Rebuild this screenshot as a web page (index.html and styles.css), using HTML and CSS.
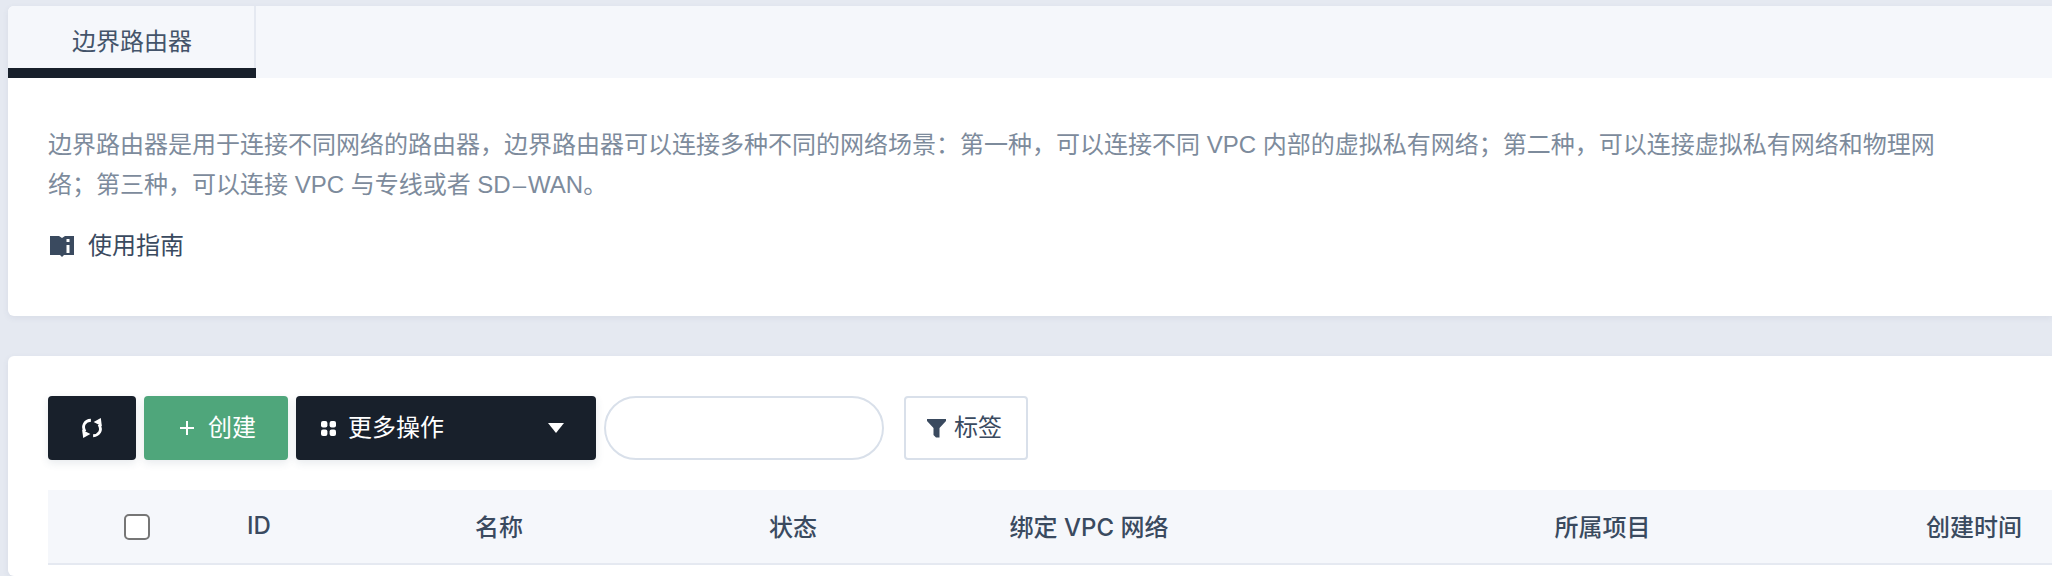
FILE: index.html
```html
<!DOCTYPE html>
<html lang="zh-CN">
<head>
  <meta charset="UTF-8">
  <title>边界路由器</title>
  <link rel="stylesheet" href="styles.css">
</head>
<body>

  <!-- 说明卡片 -->
  <section class="card intro-card">
    <div class="tab-bar">
      <div class="tab tab-active"><span class="tab-label">边界路由器</span></div>
    </div>
    <div class="intro-body">
      <p class="intro-text">边界路由器是用于连接不同网络的路由器，边界路由器可以连接多种不同的网络场景：第一种，可以连接不同 VPC 内部的虚拟私有网络；第二种，可以连接虚拟私有网络和物理网络；第三种，可以连接 VPC 与专线或者 SD&#8202;–&#8202;WAN。</p>
      <a class="guide-link" href="#">
        <svg class="icon-book" viewBox="0 0 24 22" width="24" height="22">
          <path fill="#3a4a5f" fill-rule="evenodd" d="M0 1 H9 L12 3 L15 1 H24 V20 H14 L12 22 L10 20 H0 Z M16.5 4 h3 v3 h-3 Z M16.5 10 h3 v8 h-3 Z"/>
        </svg>
        <span>使用指南</span>
      </a>
    </div>
  </section>

  <!-- 列表卡片 -->
  <section class="card list-card">
    <div class="toolbar">
      <button class="btn btn-dark btn-refresh" type="button">
        <svg viewBox="0 0 20 18" width="22" height="20" fill="none">
          <path stroke="#fff" stroke-width="2.6" d="M9 2 C3.5 2.2 .5 7 3.6 12.2"/>
          <path fill="#fff" d="M1 10.5 L8.5 14.5 L2 18 Z"/>
          <path stroke="#fff" stroke-width="2.6" d="M11 16 C16.5 15.8 19.5 11 16.4 5.8"/>
          <path fill="#fff" d="M19 7.5 L11.5 3.5 L18 0 Z"/>
        </svg>
      </button>
      <button class="btn btn-green btn-create" type="button">
        <svg viewBox="0 0 14 14" width="14" height="14">
          <path fill="#fff" d="M6 0 h2 v6 h6 v2 h-6 v6 h-2 v-6 h-6 v-2 h6 Z"/>
        </svg>
        <span class="btn-text">创建</span>
      </button>
      <button class="btn btn-dark btn-more" type="button">
        <span class="more-label">
          <svg viewBox="0 0 15 15" width="15" height="15" fill="#fff">
            <rect x="0" y="0" width="6.4" height="6.4" rx="2"/>
            <rect x="8.6" y="0" width="6.4" height="6.4" rx="2"/>
            <rect x="0" y="8.6" width="6.4" height="6.4" rx="2"/>
            <rect x="8.6" y="8.6" width="6.4" height="6.4" rx="2"/>
          </svg>
          <span class="btn-text">更多操作</span>
        </span>
        <span class="caret"></span>
      </button>
      <input class="search-input" type="text">
      <button class="btn btn-tag" type="button">
        <svg viewBox="0 0 19 20" width="19" height="20">
          <path fill="#3a4a5f" d="M0 1 H19 V3 L12.5 10 V19.5 H9 L6.5 17 V10 L0 3 Z"/>
        </svg>
        <span class="btn-text">标签</span>
      </button>
    </div>

    <table class="router-table">
      <colgroup>
        <col class="col-check">
        <col class="col-id">
        <col class="col-name">
        <col class="col-status">
        <col class="col-vpc">
        <col class="col-project">
        <col class="col-time">
        <col class="col-rest">
      </colgroup>
      <thead>
        <tr>
          <th><input class="row-check" type="checkbox"></th>
          <th>ID</th>
          <th>名称</th>
          <th>状态</th>
          <th>绑定 VPC 网络</th>
          <th>所属项目</th>
          <th>创建时间</th>
          <th></th>
        </tr>
      </thead>
    </table>
  </section>

</body>
</html>
```

FILE: styles.css
```css
* {
  box-sizing: border-box;
}

html, body {
  height: 100%;
}

body {
  margin: 0;
  padding: 6px 0 0 8px;
  overflow: hidden;
  background-color: #e5e9f1;
  font-family: "Liberation Sans", "Noto Sans CJK SC", sans-serif;
  font-size: 24px;
  color: #3a4a5f;
}

.card {
  background-color: #ffffff;
  border-radius: 6px 0 0 6px;
  box-shadow: 0 2px 6px rgba(60, 80, 110, 0.08);
}

/* 标签页 */
.tab-bar {
  display: flex;
  height: 72px;
  background-color: #f5f7fb;
  border-radius: 6px 0 0 0;
}

.tab {
  width: 248px;
  height: 72px;
  color: #44546a;
}

.tab-active {
  border-bottom: 10px solid #18202b;
}

.tab-label {
  display: block;
  height: 62px;
  padding-left: 2px;
  line-height: 72px;
  text-align: center;
  border-right: 2px solid #e5e9f1;
}

.intro-card {
  height: 310px;
}

.intro-body {
  padding: 47px 40px 0;
}

.intro-text {
  margin: 0;
  max-width: 1906px;
  line-height: 40px;
  color: #7d8b9c;
}

.guide-link {
  display: flex;
  align-items: center;
  gap: 14px;
  margin-top: 21px;
  padding-left: 2px;
  line-height: 40px;
  color: #3a4a5f;
  text-decoration: none;
}

/* 列表 */
.list-card {
  margin-top: 40px;
  height: 220px;
  padding: 40px 0 0 40px;
}

.toolbar {
  display: flex;
  height: 64px;
}

.btn {
  display: flex;
  align-items: center;
  justify-content: center;
  height: 64px;
  padding: 0;
  border: none;
  border-radius: 4px;
  font-family: inherit;
  font-size: 24px;
  color: #ffffff;
  box-shadow: 0 3px 8px rgba(60, 80, 110, 0.12);
}

.btn-text {
  margin-bottom: 5px;
}

.btn-dark {
  background-color: #18202b;
}

.btn-green {
  background-color: #4fa67b;
}

.btn-refresh {
  width: 88px;
}

.btn-create {
  width: 144px;
  margin-left: 8px;
  padding-left: 4px;
  gap: 14px;
}

.btn-more {
  width: 300px;
  margin-left: 8px;
  padding: 0 32px 0 25px;
  justify-content: space-between;
}

.more-label {
  display: flex;
  align-items: center;
  gap: 12px;
}

.caret {
  width: 0;
  height: 0;
  border-left: 8px solid transparent;
  border-right: 8px solid transparent;
  border-top: 10px solid #ffffff;
}

.search-input {
  width: 280px;
  height: 64px;
  margin-left: 8px;
  border: 2px solid #d9e0ea;
  border-radius: 32px;
  background: #ffffff;
  outline: none;
}

.btn-tag {
  width: 124px;
  margin-left: 20px;
  padding-right: 3px;
  gap: 8px;
  background-color: #ffffff;
  border: 2px solid #d9e0ea;
  color: #3a4a5f;
  box-shadow: none;
}

.router-table {
  width: 2004px;
  margin-top: 30px;
  border-collapse: collapse;
  table-layout: fixed;
}

.router-table th {
  height: 74px;
  padding: 0 0 3px;
  background-color: #f5f7fb;
  border-bottom: 2px solid #e5e9f1;
  font-family: "Inter", "Noto Sans CJK SC", sans-serif;
  font-size: 24px;
  font-weight: 500;
  color: #3a4a5f;
  text-align: center;
}

.col-check { width: 178px; }
.col-id { width: 66px; }
.col-name { width: 414px; }
.col-status { width: 174px; }
.col-vpc { width: 418px; }
.col-project { width: 609px; }
.col-time { width: 134px; }
.col-rest { width: 11px; }

.row-check {
  display: block;
  width: 26px;
  height: 26px;
  margin: 3px auto 0;
  appearance: none;
  background: #ffffff;
  border: 2px solid #767676;
  border-radius: 5px;
}
```
